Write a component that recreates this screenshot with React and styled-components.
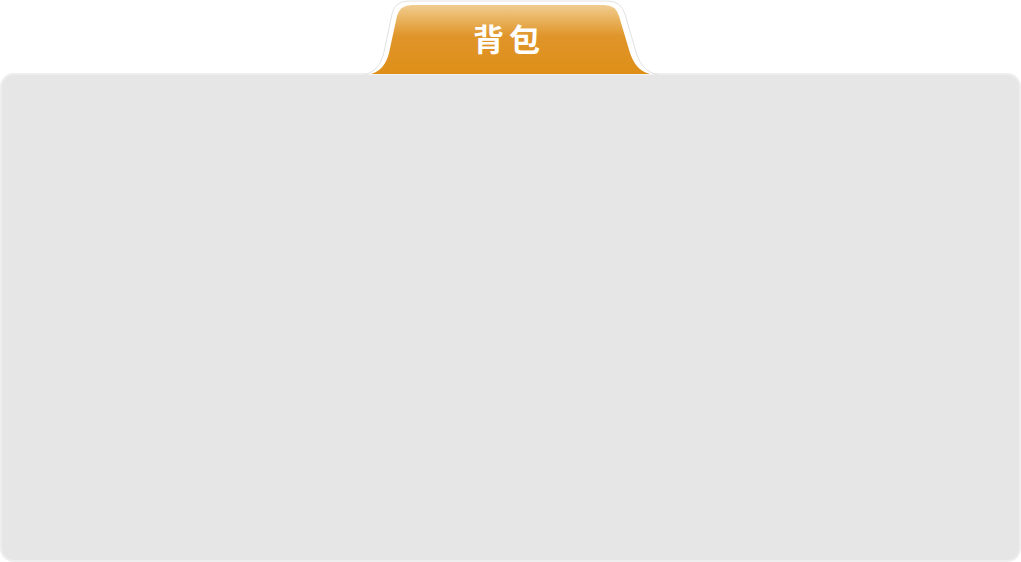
import React from 'react'
import styled, { createGlobalStyle } from 'styled-components'

const GlobalStyle = createGlobalStyle`
  html, body {
    margin: 0;
    padding: 0;
    background: #ffffff;
  }
  body {
    font-family: "Noto Sans CJK SC", "Noto Sans", sans-serif;
  }
`

const Page = styled.div`
  width: 1021px;
  height: 562px;
  display: flex;
  flex-direction: column;
  align-items: center;
`

const Tab = styled.div`
  position: relative;
  width: 294px;
  height: 75px;
  flex-shrink: 0;
  margin-bottom: -2px;
  z-index: 1;
  display: flex;
  justify-content: center;
  align-items: flex-start;
  > svg {
    position: absolute;
    left: 0;
    top: 0;
  }
`

const TabTitle = styled.span`
  position: relative;
  margin-top: 18px;
  margin-left: -3px;
  color: #ffffff;
  font-size: 31px;
  font-weight: 700;
  letter-spacing: 5px;
  line-height: 40px;
`

const Panel = styled.div`
  width: 1021px;
  flex: 1;
  box-sizing: border-box;
  background: #e6e6e6;
  border: 2px solid #eeeeee;
  border-radius: 14px;
`

const TabShape = () => (
  <svg width="294" height="75" viewBox="0 0 294 75">
    <defs>
      <linearGradient id="tabFill" x1="0" y1="0" x2="0" y2="1">
        <stop offset="0" stopColor="#f0cd92" />
        <stop offset="0.18" stopColor="#eab664" />
        <stop offset="0.45" stopColor="#e0952a" />
        <stop offset="1" stopColor="#de8f18" />
      </linearGradient>
    </defs>
    <path
      d="M0,75 C10,72 17,66 20,52 L28,14 Q31,1 44,1 L244,1 Q257,1 261,14 L272,52 C276,66 283,72 294,75 Z"
      fill="#ffffff"
      stroke="#e2e2e2"
      strokeWidth="1"
    />
    <path
      d="M7,74 C17,71 22,64 25,53 L33,16 Q36,5 48,5 L240,5 Q252,5 255,16 L266,53 C270,64 275,71 286,74 Z"
      fill="url(#tabFill)"
    />
  </svg>
)

export default function App() {
  return (
    <>
      <GlobalStyle />
      <Page>
        <Tab>
          <TabShape />
          <TabTitle>背包</TabTitle>
        </Tab>
        <Panel />
      </Page>
    </>
  )
}
